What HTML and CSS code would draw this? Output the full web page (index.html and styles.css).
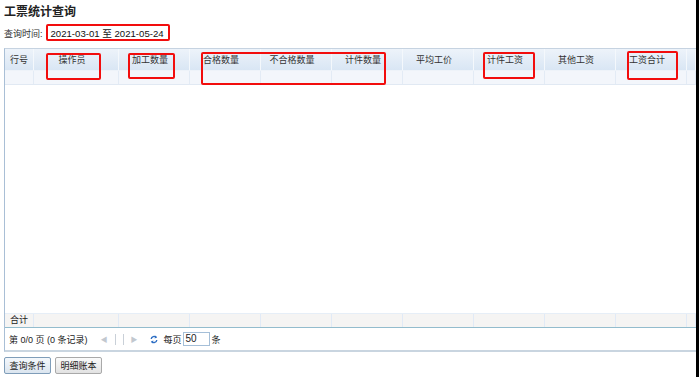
FILE: index.html
```html
<!DOCTYPE html>
<html lang="zh-CN">
<head>
  <meta charset="UTF-8" />
  <title>工票统计查询</title>
  <link rel="stylesheet" href="styles.css">
</head>
<body>
  <div class="page">
    <h1 class="title">工票统计查询</h1>
    <div class="query">
      <span class="query-label">查询时间:</span>
      <span class="query-range">2021-03-01 至 2021-05-24</span>
    </div>

    <div class="grid">
      <div class="grid-head">
        <div class="cell">行号</div>
        <div class="cell">操作员</div>
        <div class="cell">加工数量</div>
        <div class="cell">合格数量</div>
        <div class="cell">不合格数量</div>
        <div class="cell">计件数量</div>
        <div class="cell">平均工价</div>
        <div class="cell">计件工资</div>
        <div class="cell">其他工资</div>
        <div class="cell">工资合计</div>
        <div class="cell"></div>
      </div>
      <div class="grid-filter">
        <div class="cell"></div><div class="cell"></div><div class="cell"></div>
        <div class="cell"></div><div class="cell"></div><div class="cell"></div>
        <div class="cell"></div><div class="cell"></div><div class="cell"></div>
        <div class="cell"></div><div class="cell"></div>
      </div>
      <div class="grid-body"></div>
      <div class="grid-foot">
        <div class="cell">合计</div><div class="cell"></div><div class="cell"></div>
        <div class="cell"></div><div class="cell"></div><div class="cell"></div>
        <div class="cell"></div><div class="cell"></div><div class="cell"></div>
        <div class="cell"></div><div class="cell"></div>
      </div>
      <div class="pager">
        <span class="pager-info">第 0/0 页 (0 条记录)</span>
        <span class="pager-nav">
          <span class="arrow">◀</span>
          <span class="sep"></span>
          <span class="sep"></span>
          <span class="arrow">▶</span>
        </span>
        <svg class="refresh" width="8" height="9" viewBox="0 0 8 9">
          <path d="M1.2 4 A3 3 0 0 1 6.3 2.3" fill="none" stroke="#2f6fc4" stroke-width="1.4"/>
          <path d="M5 0.6 L7.2 2.6 L4.6 3.4 Z" fill="#2f6fc4"/>
          <path d="M6.8 5 A3 3 0 0 1 1.7 6.7" fill="none" stroke="#2f6fc4" stroke-width="1.4"/>
          <path d="M3 8.4 L0.8 6.4 L3.4 5.6 Z" fill="#2f6fc4"/>
        </svg>
        <span class="pager-size">每页</span>
        <span class="pager-input">50</span>
        <span>条</span>
      </div>
    </div>

    <div class="actions">
      <button class="btn btn-active">查询条件</button>
      <button class="btn">明细账本</button>
    </div>
  </div>

  <!-- annotation boxes drawn over the screenshot -->
  <div class="mark mark-date"></div>
  <div class="mark mark-op"></div>
  <div class="mark mark-qty"></div>
  <div class="mark mark-pass"></div>
  <div class="mark mark-piece"></div>
  <div class="mark mark-total"></div>
</body>
</html>
```

FILE: styles.css
```css
* {
  box-sizing: border-box;
}

body {
  margin: 0;
  padding: 0;
  background: #fff;
  font-family: 'Liberation Sans', 'Noto Sans CJK SC', sans-serif;
  color: #222;
  height: 377px;
  overflow: hidden;
  border-right: 3px solid #000;
}

.page {
  padding: 5px 0 0 4px;
}

.title {
  margin: 0;
  font-size: 12px;
  line-height: 14px;
  font-weight: 700;
  height: 15px;
}

.query {
  display: flex;
  align-items: center;
  height: 28px;
  padding-bottom: 2px;
}

.query-label {
  font-size: 9px;
  color: #333;
  margin-right: 8px;
}

.query-range {
  font-size: 9.6px;
  color: #111;
}

.grid {
  display: flex;
  flex-direction: column;
  height: 304px;
  border-left: 1px solid #a9bfd6;
  border-top: 1px solid #c6d3e1;
  border-bottom: 2px solid #c9d5e0;
}

.grid-head,
.grid-filter,
.grid-foot {
  display: grid;
  grid-template-columns: 29px 85px repeat(8, 71px) 1fr;
}

.grid-head {
  height: 22px;
  background: linear-gradient(#edf3fa, #d9e6f4);
  border-bottom: 1px solid #eef3f9;
}

.grid-head .cell {
  display: flex;
  align-items: center;
  justify-content: center;
  padding-right: 8px;
  font-size: 9px;
  color: #333;
  border-right: 1px solid #f4f8fc;
}

.grid-head .cell:first-child {
  padding-right: 0;
}

.grid-filter {
  height: 14px;
  background: #f3f6fb;
  border-bottom: 1px solid #e1e9f3;
}

.grid-filter .cell {
  border-right: 1px solid #e3ebf5;
}

.grid-body {
  flex: 1;
  background: #fff;
}

.grid-foot {
  height: 15px;
  background: #f5f4f3;
  border-top: 1px solid #e6eef7;
  border-bottom: 1px solid #93bccd;
}

.grid-foot .cell {
  font-size: 9px;
  line-height: 13px;
  text-align: center;
  border-right: 1px solid #e1eaf6;
}

.pager {
  display: flex;
  align-items: center;
  height: 22px;
  padding-left: 4px;
  font-size: 9px;
  color: #222;
}

.pager-info {
  margin-right: 13px;
}

.pager-nav {
  display: flex;
  align-items: center;
  gap: 7px;
  color: #c2c8cf;
  font-size: 7px;
  margin-right: 12px;
}

.sep {
  width: 1px;
  height: 11px;
  background: #c9d0d8;
}

.refresh {
  margin-right: 6px;
}

.pager-size {
  margin-right: 1px;
}

.pager-input {
  width: 27px;
  height: 14px;
  border: 1px solid #a5bfd8;
  font-size: 10px;
  line-height: 12px;
  padding-left: 2px;
  margin-right: 2px;
}

.actions {
  display: flex;
  gap: 4px;
  padding-top: 5px;
}

.btn {
  height: 17px;
  width: 47px;
  padding: 0;
  font-family: 'Noto Sans CJK SC', sans-serif;
  font-size: 9px;
  color: #222;
  background: linear-gradient(#fbfbfb, #e2e2e2);
  border: 1px solid #a9a9a9;
  border-radius: 2px;
}

.btn-active {
  border-color: #7f9db9;
  background: linear-gradient(#f4f8fc, #dbe5ef);
}

.mark {
  position: absolute;
  border: 2px solid #f20d0d;
  border-radius: 2px;
}

.mark-date  { left: 46px;  top: 24px; width: 124px; height: 17px; }
.mark-op    { left: 46px;  top: 53px; width: 55px;  height: 27px; }
.mark-qty   { left: 128px; top: 53px; width: 47px;  height: 26px; }
.mark-pass  { left: 201px; top: 52px; width: 185px; height: 33px; }
.mark-piece { left: 483px; top: 52px; width: 52px;  height: 27px; }
.mark-total { left: 627px; top: 51px; width: 51px;  height: 29px; }
```
